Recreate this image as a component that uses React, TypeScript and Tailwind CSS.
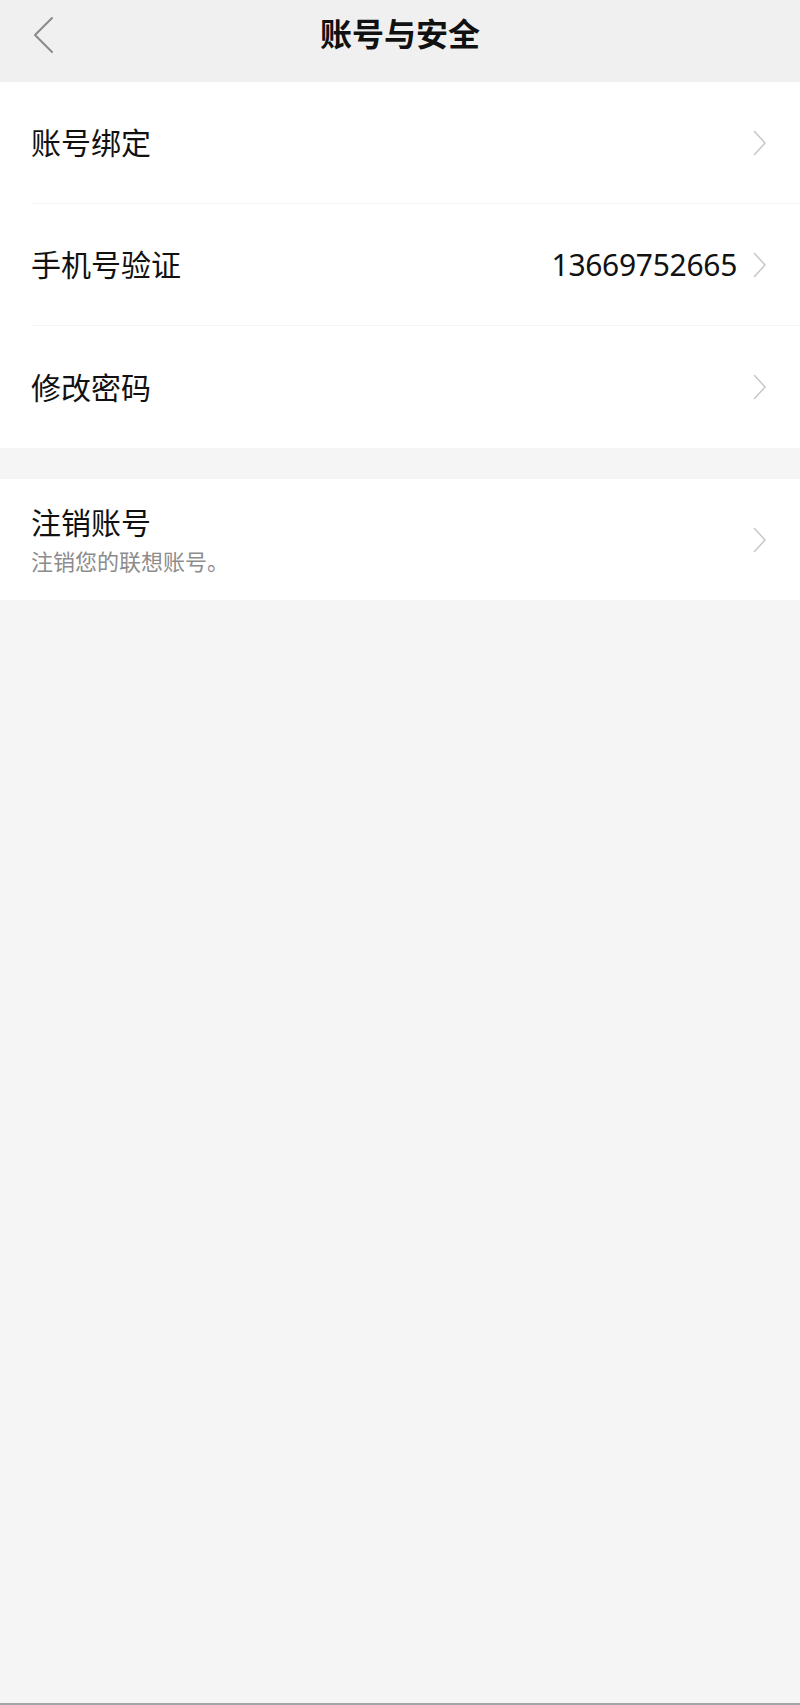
import React from 'react';

function Chevron() {
  return (
    <svg width="14" height="26" viewBox="0 0 14 26" fill="none" className="shrink-0">
      <path d="M1.5 1.5 L12 13 L1.5 24.5" stroke="#c9c9c9" strokeWidth="1.6" strokeLinecap="round" strokeLinejoin="round" />
    </svg>
  );
}

function Row({ label, value, last }: { label: string; value?: string; last?: boolean }) {
  return (
    <div className="bg-white pl-[31px]">
      <div className={`h-[122px] flex items-center pr-[33px] ${last ? '' : 'border-b border-[#f4f4f4]'}`}>
        <span className="flex-1 text-[30px] text-[#111]">{label}</span>
        {value && <span className="text-[30px] text-[#111] mr-[16px] tracking-[-0.3px]">{value}</span>}
        <Chevron />
      </div>
    </div>
  );
}

export default function App() {
  return (
    <main
      className="h-[1705px] flex flex-col bg-[#f5f5f5]"
      style={{ fontFamily: '"Noto Sans", "Noto Sans CJK SC", sans-serif' }}
    >
      {/* header */}
      <header className="h-[82px] pb-[12px] bg-[#f0f0f0] flex items-center relative">
        <svg width="22" height="38" viewBox="0 0 22 38" fill="none" className="ml-[32px]">
          <path d="M20 2 L3 19 L20 36" stroke="#8a8a8a" strokeWidth="2" strokeLinecap="round" strokeLinejoin="round" />
        </svg>
        <h1 className="absolute inset-x-0 top-[12px] text-center text-[32px] leading-[44px] font-bold text-[#111] pointer-events-none">账号与安全</h1>
      </header>

      <section>
        <Row label="账号绑定" />
        <Row label="手机号验证" value="13669752665" />
        <Row label="修改密码" last />
      </section>

      <section className="mt-[31px] bg-white pl-[31px] pr-[33px] h-[121px] flex items-center">
        <div className="flex-1">
          <div className="text-[30px] text-[#111] leading-[40px]">注销账号</div>
          <div className="text-[22px] text-[#8c8c8c] leading-[30px] mt-[3px]">注销您的联想账号。</div>
        </div>
        <Chevron />
      </section>

      <div className="flex-1" />
      <div className="h-[2px] bg-[#a5a5a5]" />
    </main>
  );
}
